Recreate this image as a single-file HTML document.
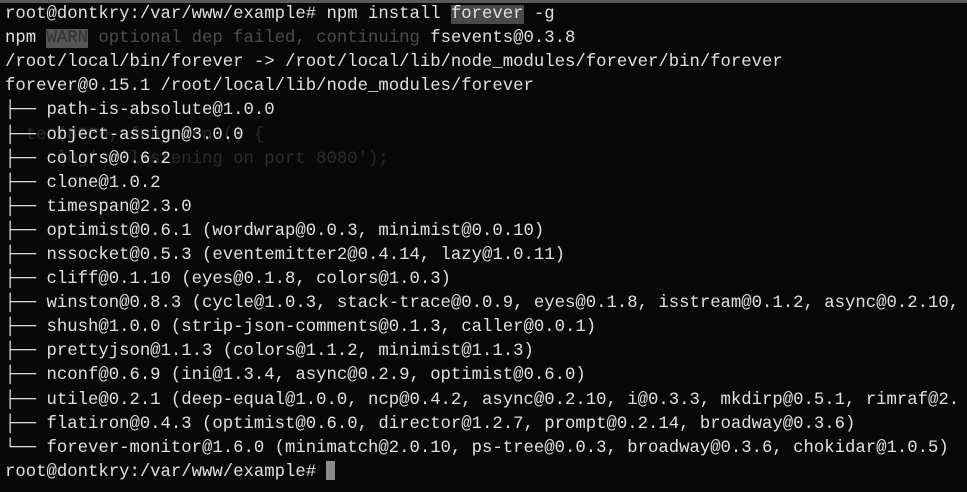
<!DOCTYPE html>
<html><head><meta charset="utf-8"><style>
html,body{margin:0;padding:0;background:#080808;width:967px;height:492px;overflow:hidden;position:relative}
.top{position:absolute;left:0;top:0;width:967px;height:3px;background:#5a5a5a}
.t div,.g{position:absolute;left:5px;height:24px;line-height:24px;white-space:pre;font-family:"Liberation Mono","DejaVu Sans Mono",monospace;font-size:17.3px;color:#e0e0e0}
.g{color:#2c2c2c}
.hl{background:#4a4a4a}
.w{background:#555;color:#333}
.d{color:#4c4c4c}
.cur{display:inline-block;width:9px;height:19px;background:#8a8a8a;vertical-align:-4px}
</style></head><body>
<div class="top"></div>
<div class="g" style="top:124px">  ten(8080, function () {</div>
<div class="g" style="top:148px">     log(  'listening on port 8080');</div>
<div class="t">
<div style="top:3px">root@dontkry:/var/www/example# npm install <span class="hl">forever</span> -g</div>
<div style="top:27px">npm <span class="w">WARN</span> <span class="d">optional dep failed, continuing</span> fsevents@0.3.8</div>
<div style="top:51px">/root/local/bin/forever -> /root/local/lib/node_modules/forever/bin/forever</div>
<div style="top:75px">forever@0.15.1 /root/local/lib/node_modules/forever</div>
<div style="top:99px">├── path-is-absolute@1.0.0</div>
<div style="top:124px">├── object-assign@3.0.0</div>
<div style="top:148px">├── colors@0.6.2</div>
<div style="top:172px">├── clone@1.0.2</div>
<div style="top:196px">├── timespan@2.3.0</div>
<div style="top:220px">├── optimist@0.6.1 (wordwrap@0.0.3, minimist@0.0.10)</div>
<div style="top:244px">├── nssocket@0.5.3 (eventemitter2@0.4.14, lazy@1.0.11)</div>
<div style="top:268px">├── cliff@0.1.10 (eyes@0.1.8, colors@1.0.3)</div>
<div style="top:292px">├── winston@0.8.3 (cycle@1.0.3, stack-trace@0.0.9, eyes@0.1.8, isstream@0.1.2, async@0.2.10,</div>
<div style="top:316px">├── shush@1.0.0 (strip-json-comments@0.1.3, caller@0.0.1)</div>
<div style="top:340px">├── prettyjson@1.1.3 (colors@1.1.2, minimist@1.1.3)</div>
<div style="top:364px">├── nconf@0.6.9 (ini@1.3.4, async@0.2.9, optimist@0.6.0)</div>
<div style="top:389px">├── utile@0.2.1 (deep-equal@1.0.0, ncp@0.4.2, async@0.2.10, i@0.3.3, mkdirp@0.5.1, rimraf@2.</div>
<div style="top:413px">├── flatiron@0.4.3 (optimist@0.6.0, director@1.2.7, prompt@0.2.14, broadway@0.3.6)</div>
<div style="top:437px">└── forever-monitor@1.6.0 (minimatch@2.0.10, ps-tree@0.0.3, broadway@0.3.6, chokidar@1.0.5)</div>
<div style="top:461px">root@dontkry:/var/www/example# <span class="cur"></span></div>
</div>
</body></html>
